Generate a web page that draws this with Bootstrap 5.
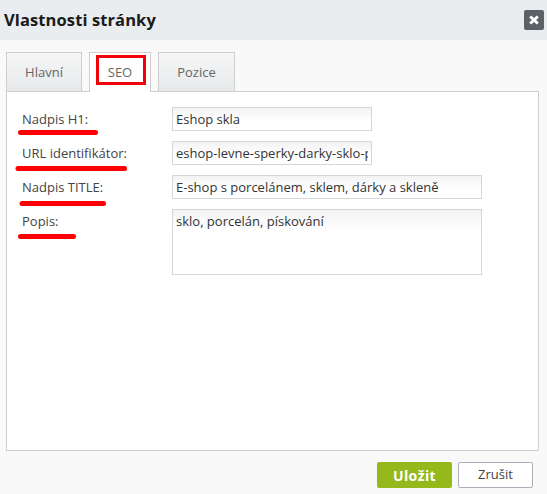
<!DOCTYPE html>
<html lang="cs">
<head>
  <meta charset="UTF-8">
  <meta name="viewport" content="width=device-width, initial-scale=1.0">
  <title>Vlastnosti stránky</title>
  <link href="https://cdn.jsdelivr.net/npm/bootstrap@5.3.3/dist/css/bootstrap.min.css" rel="stylesheet">
  <style>
    body {
      background-color: #f9f9f9;
      font-family: "Open Sans", sans-serif;
      font-size: 13px;
      color: #333;
    }
    .page-box {
      position: relative;
      width: 547px;
      height: 494px;
      overflow: hidden;
    }
    .dlg-head {
      height: 40px;
      background-color: #e9edf0;
      padding: 0 4px;
    }
    .dlg-title {
      font-size: 16.5px;
      font-weight: 700;
      color: #1a1a1a;
      margin: 0;
      letter-spacing: .1px;
    }
    .dlg-close {
      width: 20px;
      height: 20px;
      background-color: #5b6166;
      border: 0;
      border-radius: 2px;
      margin-right: -1px;
      padding: 0;
    }
    .dlg-tabs {
      margin: 12px 8px 0 6px;
      gap: 7px;
      border-bottom: 0;
      height: 39px;
    }
    .dlg-tabs .nav-link {
      width: 76px;
      height: 39px;
      padding: 0;
      line-height: 38px;
      text-align: center;
      color: #666;
      font-size: 13px;
      background: linear-gradient(#f6f6f6, #e6e9eb);
      border: 1px solid #cfcfcf;
      border-bottom: 0;
      border-radius: 0;
      margin: 0;
    }
    .dlg-tabs .nav-link.active {
      width: 62px;
      height: 40px;
      background: #fff;
      position: relative;
      z-index: 1;
      color: #666;
      border-color: #cfcfcf;
    }
    .dlg-tabs .tab-wide {
      width: 77px;
    }
    .dlg-panel {
      margin: 0 8px 0 6px;
      height: 360px;
      background-color: #fff;
      border: 1px solid #cfcfcf;
      padding: 15px 0 0 15px;
    }
    .field-row {
      margin-bottom: 10px;
    }
    .field-label {
      width: 150px;
      flex: none;
      margin: 0;
      line-height: 24px;
      color: #444;
    }
    .field-input {
      height: 24px;
      border: 1px solid #d6d6d6;
      border-radius: 0;
      padding: 0 3px;
      font-size: 13px;
      line-height: 22px;
      color: #333;
      background: linear-gradient(#f3f3f3, #fff 60%);
      box-shadow: none;
    }
    textarea.field-input {
      height: 66px;
      min-height: 66px;
      resize: none;
      padding-top: 2px;
      line-height: 18px;
      background: linear-gradient(#f3f3f3, #fff 20px);
    }
    .w-short { width: 200px; }
    .w-long { width: 310px; }
    .dlg-foot {
      margin: 11px 14px 0 0;
      gap: 6px;
    }
    .btn-save, .btn-cancel {
      width: 75px;
      height: 26px;
      padding: 0;
      font-size: 14px;
      border-radius: 2px;
    }
    .btn-save {
      background-color: #95b91b;
      border: 0;
      color: #fff;
      font-weight: 700;
      letter-spacing: .4px;
    }
    .btn-cancel {
      background-color: #fff;
      border: 1px solid #a9b0ba;
      color: #444;
      font-size: 13px;
    }
    .red-marks {
      position: absolute;
      left: 0;
      top: 0;
      z-index: 2;
      pointer-events: none;
    }
  </style>
</head>
<body>
  <div class="page-box">
    <div class="dlg-head d-flex align-items-center justify-content-between">
      <h1 class="dlg-title">Vlastnosti stránky</h1>
      <button class="dlg-close d-flex align-items-center justify-content-center" type="button" aria-label="Zavřít">
        <svg width="10" height="10" viewBox="0 0 10 10"><path d="M1.2 1.5l7.6 7M8.8 1.5l-7.6 7" stroke="#fff" stroke-width="3"/></svg>
      </button>
    </div>

    <ul class="nav nav-tabs dlg-tabs">
      <li class="nav-item"><a class="nav-link" href="#">Hlavní</a></li>
      <li class="nav-item"><a class="nav-link active" href="#">SEO</a></li>
      <li class="nav-item"><a class="nav-link tab-wide" href="#">Pozice</a></li>
    </ul>

    <div class="dlg-panel">
      <div class="field-row d-flex">
        <label class="field-label">Nadpis H1:</label>
        <input class="form-control field-input w-short" value="Eshop skla">
      </div>
      <div class="field-row d-flex">
        <label class="field-label">URL identifikátor:</label>
        <input class="form-control field-input w-short" value="eshop-levne-sperky-darky-sklo-porcelan">
      </div>
      <div class="field-row d-flex">
        <label class="field-label">Nadpis TITLE:</label>
        <input class="form-control field-input w-long" value="E-shop s porcelánem, sklem, dárky a skleně">
      </div>
      <div class="field-row d-flex">
        <label class="field-label">Popis:</label>
        <textarea class="form-control field-input w-long">sklo, porcelán, pískování</textarea>
      </div>
    </div>

    <div class="dlg-foot d-flex justify-content-end">
      <button class="btn btn-save" type="button">Uložit</button>
      <button class="btn btn-cancel" type="button">Zrušit</button>
    </div>

    <!-- red annotations drawn over the dialog -->
    <svg class="red-marks" width="547" height="494" viewBox="0 0 547 494">
      <rect x="97.5" y="56.5" width="47" height="27" fill="none" stroke="#f00008" stroke-width="3"/>
      <g stroke="#f00" stroke-width="5" stroke-linecap="round">
        <path d="M20.5 132.5H95.5"/>
        <path d="M18 168.5H124.5"/>
        <path d="M22 203.5H103.5"/>
        <path d="M20.5 236.5H73.5"/>
      </g>
    </svg>
  </div>

  <script src="https://cdn.jsdelivr.net/npm/bootstrap@5.3.3/dist/js/bootstrap.bundle.min.js"></script>
</body>
</html>
